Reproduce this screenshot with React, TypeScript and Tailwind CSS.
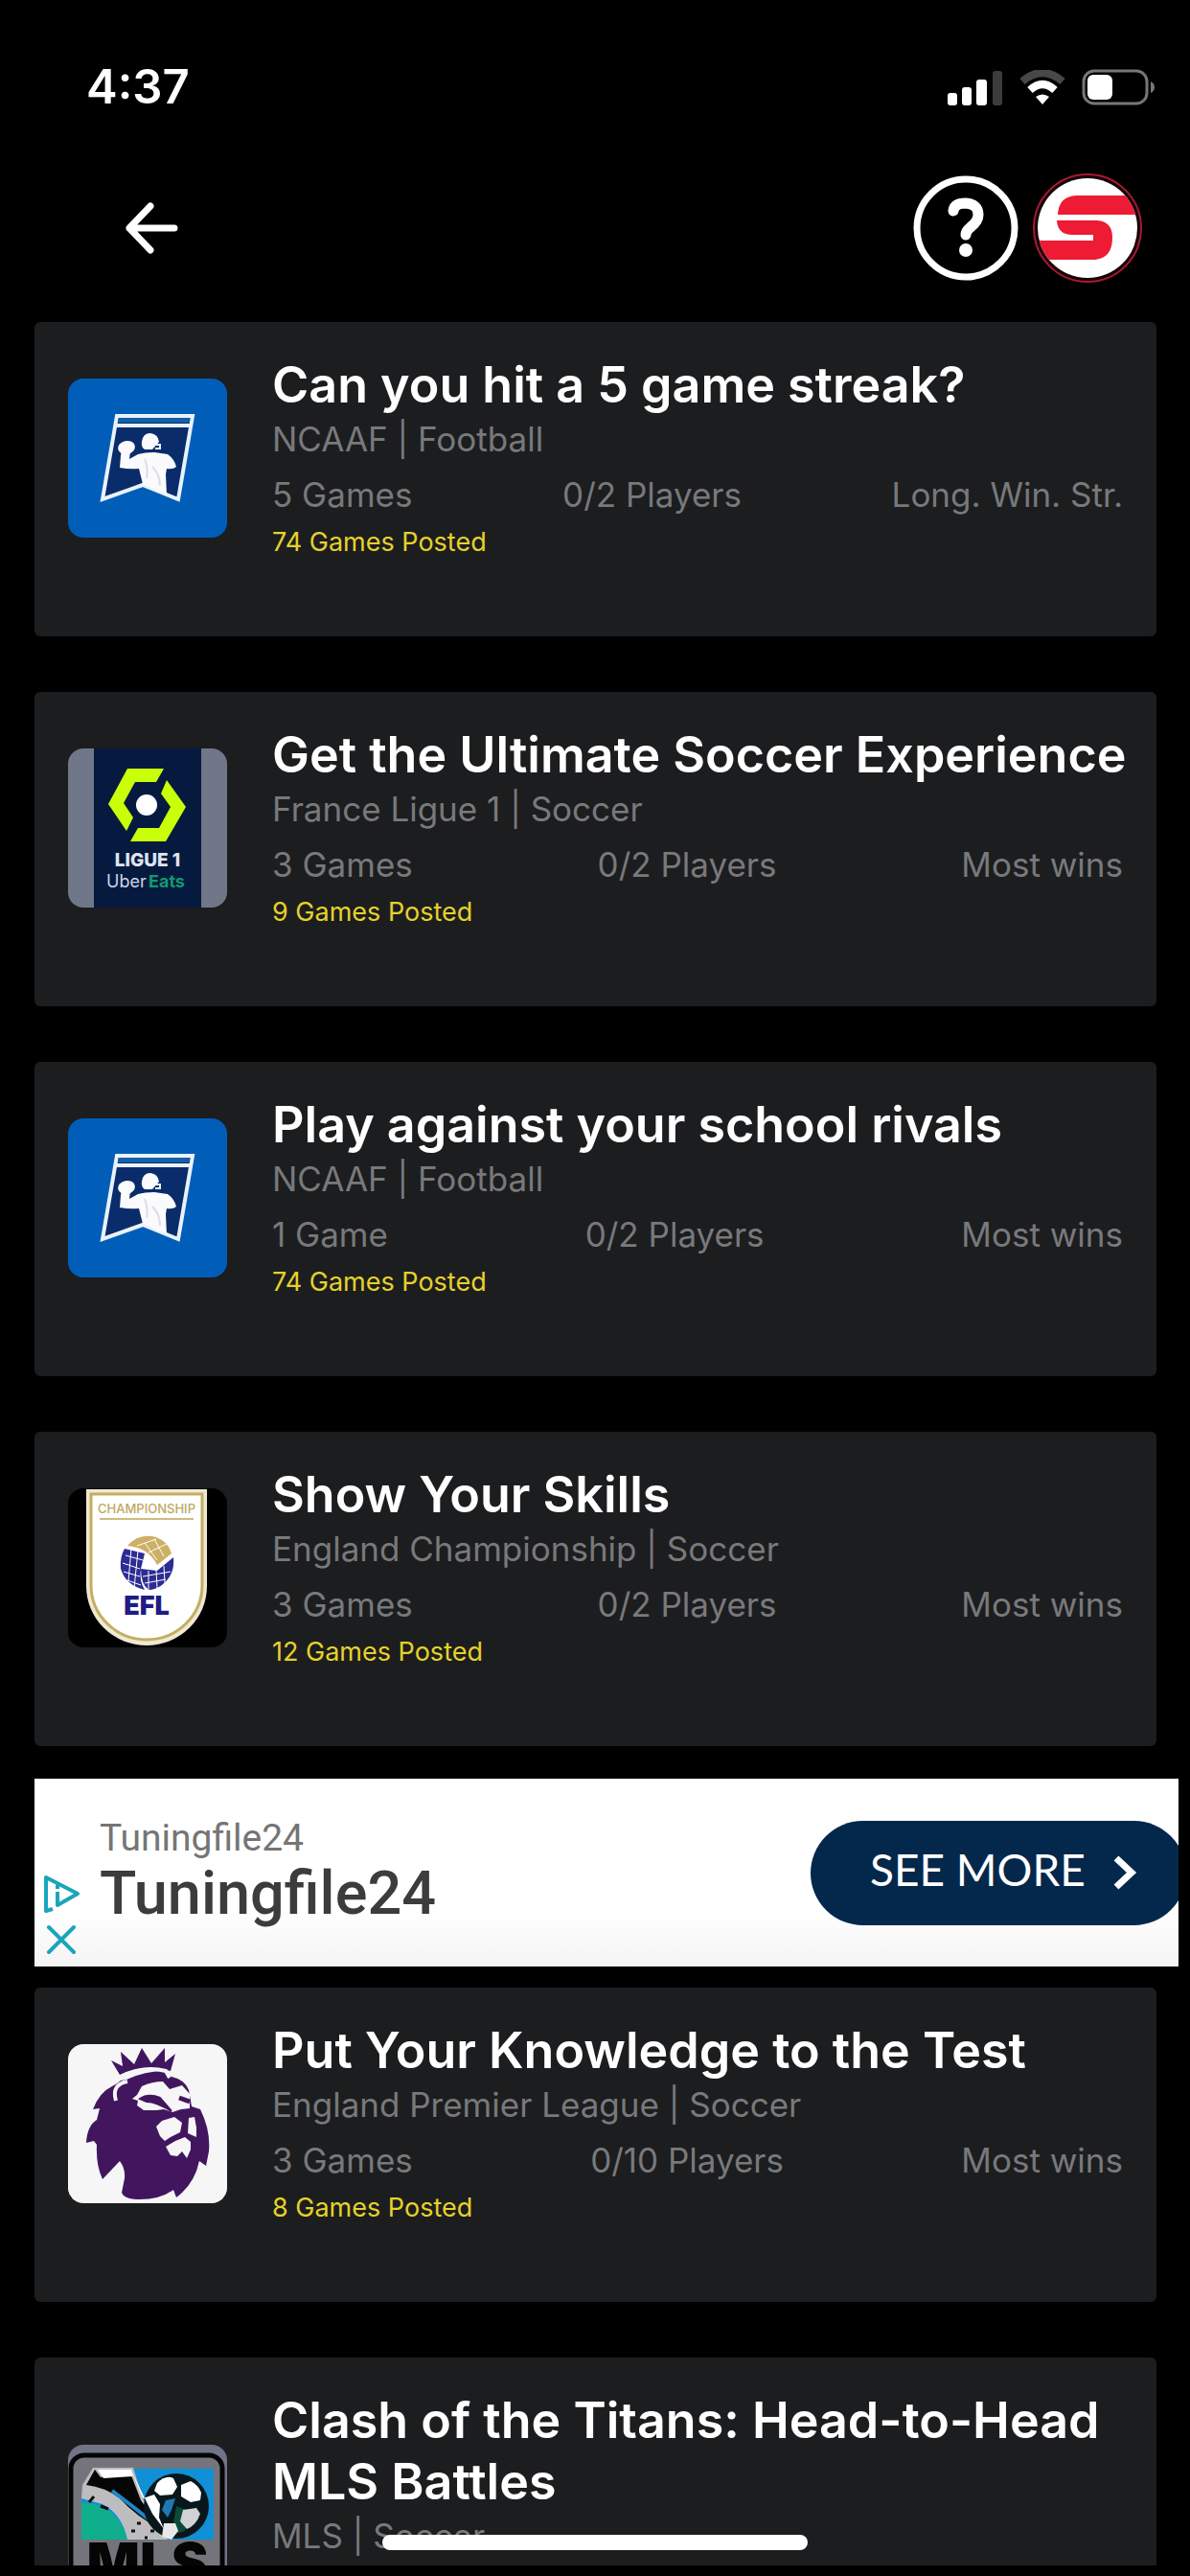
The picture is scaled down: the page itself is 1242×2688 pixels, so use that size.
// Contest lobby: list of open contests with a banner ad in between.
import type { ReactNode } from 'react';

function NcaaLogo() {
  return (
    <svg viewBox="0 0 166 166" className="h-full w-full">
      <rect width="166" height="166" fill="#005eb8" />
      <path d="M51 39H130L115 126 78 111 36 126Z" fill="#0a2c6b" stroke="#e9f2fb" strokeWidth="4" />
      <path d="M53 41H127L126 46H52Z" fill="#1560a8" />
      <path d="M49 49H128" stroke="#e9f2fb" strokeWidth="4" />
      <g fill="#fbfbfd">
        <ellipse cx="61" cy="72" rx="9" ry="7" transform="rotate(-12 61 72)" />
        <path d="M56 76H65L64 84 73 79Q80 77 90 77L104 79Q111 84 113 92 110 95 103 94L102 100 103 121 78 110 74 94Q64 95 54 93L55 80Z" />
        <path d="M77 66Q78 57 86 57 94 58 95 66L88 74H80Q76 71 77 66Z" />
      </g>
      <path d="M89 69H96V73H91" fill="none" stroke="#e9f2fb" strokeWidth="2" />
      <path d="M80 84Q84 94 82 104M88 92Q96 100 96 112" fill="none" stroke="#dddde6" strokeWidth="2" />
    </svg>
  );
}

function LigueLogo() {
  return (
    <svg viewBox="0 0 166 166" className="h-full w-full">
      <rect width="166" height="166" fill="#6f7788" />
      <rect x="27" width="112" height="166" fill="#061a40" />
      <path d="M62 21H100L92 35H70L58 57 68 72 61 86 42 58Z" fill="#caff0a" />
      <path d="M103 33 123 61 102 97H65L73 83H95L107 61 97 47Z" fill="#caff0a" />
      <circle cx="82" cy="59" r="11" fill="#fff" />
      <text x="83" y="123" textAnchor="middle" fontSize="19" fontWeight="800" fontFamily="Inter, sans-serif" fill="#dfe5f0">LIGUE 1</text>
      <text x="40" y="145" fontSize="18" fontFamily="Inter, sans-serif" fill="#ccd4e4">Uber</text>
      <text x="84" y="145" fontSize="18" fontWeight="700" fontFamily="Inter, sans-serif" fill="#129a6d">Eats</text>
    </svg>
  );
}

function EflLogo() {
  return (
    <svg viewBox="0 0 166 166" className="h-full w-full">
      <rect width="166" height="166" />
      <path d="M19 1H145V102A63 62 0 0 1 19 102Z" fill="#efe8d3" />
      <path d="M24 6H140V101A58 57 0 0 1 24 101Z" fill="#fff" stroke="#c3ae62" strokeWidth="3" />
      <text x="82" y="26" textAnchor="middle" fontSize="13" fontWeight="500" fontFamily="Inter, sans-serif" fill="#bda862">CHAMPIONSHIP</text>
      <path d="M33 32H131" stroke="#cdbd84" strokeWidth="2" />
      <path d="M62 60Q74 46 92 51 105 56 108 68L93 80Q84 62 62 60Z" fill="#cdb066" />
      <path d="M59 63 80 68 76 84Q74 96 80 106 60 101 55 84 54 71 59 63Z" fill="#2c2c94" />
      <path d="M76 84 93 86 110 72Q112 90 98 101 91 106 84 106 76 100 76 84Z" fill="#2c2c94" />
      <path d="M60 70l18 5M57 78l18 6M58 87l17 5M62 96l14 5M66 63l-3 34M73 65l-4 39M84 86l0 20M92 85l1 19M100 81l1 18M78 92l29-5M80 99l22-4M80 57l13 18M90 53l10 18M72 60l20-7M84 67l19-9" stroke="#fff" strokeWidth="1" />
      <text x="82" y="132" textAnchor="middle" fontSize="27" fontWeight="900" fontFamily="Inter, sans-serif" fill="#201c84">EFL</text>
    </svg>
  );
}

function PremierLogo() {
  return (
    <svg viewBox="0 0 166 166" className="h-full w-full">
      <rect width="166" height="166" fill="#f6f6f7" />
      <g fill="#42165f">
        <path d="M54 32 45 17 57 23 55 8 69 21 77 4 87 20 101 4 101 19 112 10 107 28Q78 20 54 32Z" />
        <path d="M61 37Q80 28 102 28L108 34Q122 37 126 48L129 65 138 68Q149 90 147 112L144 127 137 122Q132 146 113 160L110 152Q95 163 71 162 58 161 56 155L59 140Q60 130 54 122L36 141Q29 126 30 105L27 101 19 103Q20 85 30 79L33 67 26 68Q33 50 46 44Q52 41 55 38Z" />
      </g>
      <path d="M50 59Q45 42 62 39M56 34Q79 22 102 28L106 35" fill="none" stroke="#f6f6f7" strokeWidth="4" />
      <g fill="#f6f6f7">
        <path d="M67 57 72 53 77 44Q88 39 99 39L106 47 119 43 127 52 127 67 118 68 109 71 100 68 92 69 79 69 72 64 73 59Z" />
        <path d="M92 86 98 80 111 76 119 82 117 92 107 97 101 101 96 96Z" />
        <path d="M126 77 132 76 134 87 134 97 125 93Z" />
        <path d="M102 107 112 101 122 97 128 102 128 110 124 119 119 112 114 117 107 116Z" />
      </g>
      <path d="M75 57Q84 51 96 56L108 70Q92 60 82 60Z" fill="#42165f" stroke="#42165f" strokeWidth="2" />
      <path d="M116 56 127 60" stroke="#42165f" strokeWidth="5" />
    </svg>
  );
}

function MlsLogo() {
  return (
    <svg viewBox="0 0 166 166" className="h-full w-full">
      <rect width="166" height="166" fill="#6f7486" />
      <rect x="3" y="11" width="158" height="170" rx="14" fill="#74757c" stroke="#050505" strokeWidth="5" />
      <rect x="14" y="25" width="138" height="74" fill="#1190d6" />
      <path d="M14 25H28L18 46 14 56Z" fill="#74757c" />
      <path d="M14 60Q52 62 62 99H14Z" fill="#0fae8d" />
      <path d="M15 42 26 24H68L78 56 96 86 104 99H62Q56 72 36 62L14 56Z" fill="#bdbdc0" />
      <path d="M19 42 28 26 34 34 66 32 76 58 99 90Q70 74 54 56 38 44 19 42Z" fill="#060606" />
      <path d="M31 26H66L68 33 37 35Z" fill="#fff" />
      <path d="M46 48Q70 66 92 84" fill="none" stroke="#1d87c9" strokeWidth="4" />
      <circle cx="113" cy="64" r="34" fill="#07171c" />
      <path d="M113 64 128 70 122 90 108 94Z" fill="#0b4a3a" />
      <path d="M98 68 102 58 112 56 108 68 104 76Z" fill="#1d78b4" />
      <path d="M66 27 78 56 90 52 96 62 95 76 100 88 88 72Z" fill="#fff" />
      <path d="M93 40Q102 31 110 35L114 44 109 52 96 53 90 48Z" fill="#fff" />
      <path d="M118 42 128 38Q136 42 139 50L138 58 128 60 118 54Z" fill="#fff" />
      <path d="M120 68 134 66 138 72Q134 84 124 88L117 80Z" fill="#d0d2d4" />
      <path d="M100 82 112 82 115 90 108 99 98 96Z" fill="#e8e8e8" />
      <path d="M22 60l5-6M34 64l8 3M66 90h4M72 82h4M86 90h4M80 97h3" stroke="#101010" strokeWidth="3" />
      <text x="83" y="144" textAnchor="middle" fontSize="58" fontWeight="900" fontFamily="Inter, sans-serif" fill="#050505">MLS</text>
    </svg>
  );
}

interface Contest {
  title: string;
  league: string;
  games: string;
  players: string;
  mode: string;
  posted: string;
  logo: ReactNode;
}

const TOP: Contest[] = [
  {
    title: 'Can you hit a 5 game streak?',
    league: 'NCAAF | Football',
    games: '5 Games',
    players: '0/2 Players',
    mode: 'Long. Win. Str.',
    posted: '74 Games Posted',
    logo: <NcaaLogo />,
  },
  {
    title: 'Get the Ultimate Soccer Experience',
    league: 'France Ligue 1 | Soccer',
    games: '3 Games',
    players: '0/2 Players',
    mode: 'Most wins',
    posted: '9 Games Posted',
    logo: <LigueLogo />,
  },
  {
    title: 'Play against your school rivals',
    league: 'NCAAF | Football',
    games: '1 Game',
    players: '0/2 Players',
    mode: 'Most wins',
    posted: '74 Games Posted',
    logo: <NcaaLogo />,
  },
  {
    title: 'Show Your Skills',
    league: 'England Championship | Soccer',
    games: '3 Games',
    players: '0/2 Players',
    mode: 'Most wins',
    posted: '12 Games Posted',
    logo: <EflLogo />,
  },
];

const BOTTOM: Contest[] = [
  {
    title: 'Put Your Knowledge to the Test',
    league: 'England Premier League | Soccer',
    games: '3 Games',
    players: '0/10 Players',
    mode: 'Most wins',
    posted: '8 Games Posted',
    logo: <PremierLogo />,
  },
  {
    title: 'Clash of the Titans: Head-to-Head MLS Battles',
    league: 'MLS | Soccer',
    games: '3 Games',
    players: '0/2 Players',
    mode: 'Most wins',
    posted: '14 Games Posted',
    logo: <MlsLogo />,
  },
];

function StatusBar() {
  return (
    <div className="flex h-[180px] shrink-0 items-start justify-between pt-[60px] pr-[36px] pl-[90px]">
      <span className="font-semibold text-[49px] leading-[62px]">4:37</span>
      <div className="flex items-center gap-4 pt-3">
        <svg viewBox="0 0 58 37" className="h-[37px] w-[58px]" fill="#fff">
          <rect y="24" width="10" height="13" rx="3" />
          <rect x="15" y="18" width="10" height="19" rx="3" />
          <rect x="30" y="10" width="11" height="27" rx="3" />
          <rect x="47" y="1" width="10" height="36" rx="3" fill="#3c3c3e" />
        </svg>
        <svg viewBox="0 0 50 37" className="h-[37px] w-[50px]" fill="none">
          <path d="M4 12Q25-6 46 12" stroke="#48484a" strokeWidth="8" />
          <path d="M12 21Q25 9 38 21" stroke="#fff" strokeWidth="8" />
          <path d="M18 28Q25 23 32 28L25 36Z" fill="#fff" />
        </svg>
        <svg viewBox="0 0 77 38" className="h-[38px] w-[77px]">
          <rect x="2" y="2" width="66" height="34" rx="11" fill="none" stroke="#77777a" strokeWidth="3" />
          <rect x="6" y="6" width="26" height="26" rx="6" fill="#fff" />
          <path d="M72 13q4 2 4 6t-4 6z" fill="#77777a" />
        </svg>
      </div>
    </div>
  );
}

function Header() {
  return (
    <header className="flex h-[156px] shrink-0 items-start justify-between pr-[49px] pl-[130px]">
      <button type="button" aria-label="Back" className="mt-[30px]">
        <svg viewBox="0 0 56 56" className="h-[56px] w-[56px]" fill="none" stroke="#fff" strokeWidth="7" strokeLinecap="round" strokeLinejoin="round">
          <path d="M52 28H5M27 5 5 28 27 51" />
        </svg>
      </button>
      <div className="flex items-center gap-[14px]">
        <button type="button" aria-label="Help">
          <svg viewBox="0 0 110 110" className="h-[110px] w-[110px]" fill="none" stroke="#fff">
            <circle cx="55" cy="55" r="51" strokeWidth="7" />
            <path d="M42 37Q43 29 55 29 68 30 68 41 68 48 60 54 55 58 55 62" strokeWidth="11" strokeLinecap="round" strokeLinejoin="round" />
            <circle cx="55" cy="78" r="7" fill="#fff" stroke="none" />
          </svg>
        </button>
        <button type="button" aria-label="Profile">
          <svg viewBox="0 0 116 116" className="h-[116px] w-[116px]">
            <clipPath id="badge">
              <circle cx="58" cy="58" r="52" />
            </clipPath>
            <circle cx="58" cy="58" r="56" fill="#160206" stroke="#a51a32" strokeWidth="2" />
            <circle cx="58" cy="58" r="52" fill="#fff" />
            <g clipPath="url(#badge)" fill="#ed1b34">
              <path d="M27 44Q28 25 46 24H116V44Z" />
              <path d="M26 50H68Q84 51 84 68 84 89 66 91H0V71H64V65H42Q27 65 26 50Z" />
            </g>
          </svg>
        </button>
      </div>
    </header>
  );
}

function ContestCard({ contest }: { contest: Contest }) {
  return (
    <article className="mr-[35px] flex shrink-0 items-center gap-[47px] rounded-[6px] bg-[#1c1d1f] pt-[34px] pr-[35px] pb-[78px] pl-[35px]">
      <div className="h-[166px] w-[166px] shrink-0 overflow-hidden rounded-[16px]">{contest.logo}</div>
      <div className="min-w-0 flex-1 text-[#78797b]">
        <h2 className="-mr-2 font-semibold text-[52px] text-white leading-[64px]">{contest.title}</h2>
        <p className="text-[35px] leading-[48px]">{contest.league}</p>
        <div className="mt-2 flex justify-between text-[35px] leading-[52px]">
          <span>{contest.games}</span>
          <span>{contest.players}</span>
          <span>{contest.mode}</span>
        </div>
        <p className="mt-1 text-[#e5d22a] text-[27px] leading-[40px]">{contest.posted}</p>
      </div>
    </article>
  );
}

function AdBanner() {
  return (
    <aside className="mr-3 flex h-[196px] shrink-0 overflow-hidden bg-linear-to-b from-70% from-white to-[#f4f4f4] font-['Roboto',sans-serif]">
      <div className="flex w-[56px] flex-col items-center justify-end gap-3 pb-3">
        <svg viewBox="0 0 40 40" className="h-[40px] w-[40px]" fill="none" stroke="#1aa5ba" strokeWidth="4" strokeLinejoin="round">
          <path d="M11 36 4 38V3L37 20 16 32V18M16 11V15" />
        </svg>
        <button type="button" aria-label="Close ad">
          <svg viewBox="0 0 32 32" className="h-[32px] w-[32px]" stroke="#1aa5ba" strokeWidth="4" strokeLinecap="round">
            <path d="M3 3 29 29M29 3 3 29" />
          </svg>
        </button>
      </div>
      <div className="flex-1 pt-[38px] pl-3">
        <p className="text-[#757575] text-[39px] leading-[48px]">Tuningfile24</p>
        <p className="font-medium text-[#3c3c3c] text-[63px] leading-[68px]">Tuningfile24</p>
      </div>
      <a href="#offer" className="-mr-2 flex h-[109px] w-[392px] shrink-0 items-center gap-[28px] self-center rounded-full bg-[#04284b] pl-[62px] font-['Lato',sans-serif] text-[46px] text-white">
        <span className="pb-2">SEE MORE</span>
        <svg viewBox="0 0 26 38" className="h-[38px] w-[26px]" fill="none" stroke="#fff" strokeWidth="7">
          <path d="M4 4 20 19 4 34" />
        </svg>
      </a>
    </aside>
  );
}

export default function App() {
  return (
    <div className="relative flex h-screen flex-col overflow-hidden bg-black pb-[11px] font-['Inter',sans-serif] text-white">
      <StatusBar />
      <Header />
      <main className="flex min-h-0 flex-1 flex-col overflow-hidden pl-[36px]">
        <div className="flex shrink-0 flex-col gap-[58px]">
          {TOP.map((c) => (
            <ContestCard key={c.title} contest={c} />
          ))}
        </div>
        <div className="mt-[34px] mb-[22px] shrink-0">
          <AdBanner />
        </div>
        <div className="flex shrink-0 flex-col gap-[58px]">
          {BOTTOM.map((c) => (
            <ContestCard key={c.title} contest={c} />
          ))}
        </div>
      </main>
      {/* home indicator floats over the list */}
      <div className="-translate-x-1/2 absolute bottom-[27px] left-1/2 h-4 w-[444px] rounded-full bg-white" />
    </div>
  );
}
